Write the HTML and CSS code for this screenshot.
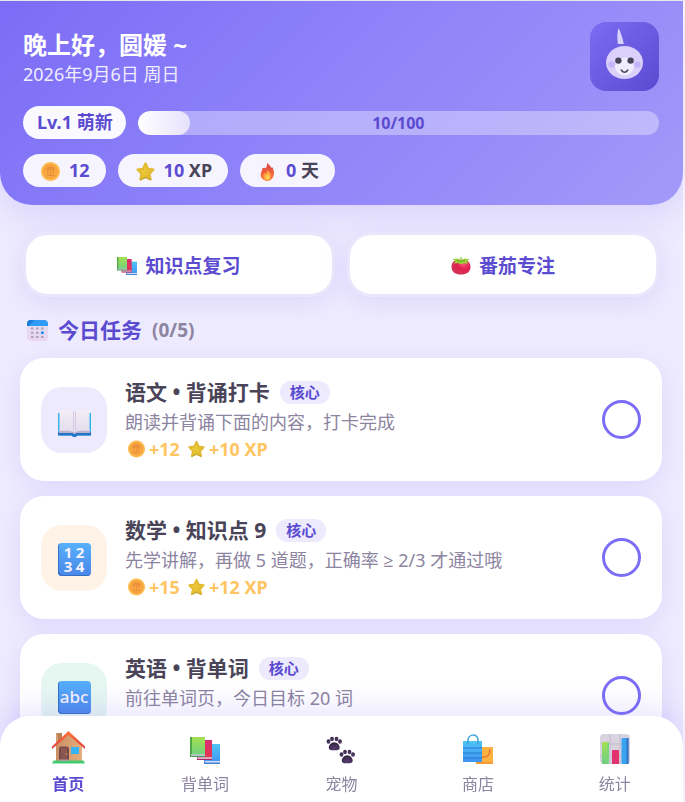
FILE: index.html
```html
<!DOCTYPE html>
<html lang="zh-CN">
<head>
<meta charset="utf-8">
<meta name="viewport" content="width=device-width, initial-scale=1">
<title>今日任务</title>
<link rel="stylesheet" href="styles.css">
</head>
<body>
<svg class="sprite" aria-hidden="true">
  <defs>
    <linearGradient id="g-horn" x1="0" y1="0" x2="1" y2="1"><stop offset="0" stop-color="#7c6cf3"/><stop offset="1" stop-color="#5a4ad0"/></linearGradient>
    <linearGradient id="g-green" x1="0" y1="0" x2="0" y2="1"><stop offset="0" stop-color="#a4df52"/><stop offset="1" stop-color="#6ccf83"/></linearGradient>
    <linearGradient id="g-red" x1="0" y1="0" x2="0" y2="1"><stop offset="0" stop-color="#d92c73"/><stop offset="1" stop-color="#e8384c"/></linearGradient>
    <linearGradient id="g-blue" x1="0" y1="0" x2="0" y2="1"><stop offset="0" stop-color="#4fc4f6"/><stop offset="1" stop-color="#3f93f0"/></linearGradient>
    <linearGradient id="g-key" x1="0" y1="0" x2="0" y2="1"><stop offset="0" stop-color="#56b0fb"/><stop offset="1" stop-color="#4a86e8"/></linearGradient>
    <linearGradient id="g-wall" x1="0" y1="0" x2="1" y2="0"><stop offset="0" stop-color="#c98f63"/><stop offset="1" stop-color="#e6ae7c"/></linearGradient>
    <linearGradient id="g-roof" x1="0" y1="0" x2="0" y2="1"><stop offset="0" stop-color="#ff7a3c"/><stop offset="1" stop-color="#dc3838"/></linearGradient>
    <linearGradient id="g-star" x1="0" y1="0" x2="1" y2="1"><stop offset="0" stop-color="#f3d845"/><stop offset="1" stop-color="#dfb22a"/></linearGradient>
    <linearGradient id="g-flame" x1="0" y1="0" x2="0" y2="1"><stop offset="0" stop-color="#dd4042"/><stop offset="1" stop-color="#ff7b38"/></linearGradient>
    <radialGradient id="g-tomato" cx=".65" cy=".3" r=".7"><stop offset="0" stop-color="#fb5378"/><stop offset=".5" stop-color="#e21f4f"/><stop offset="1" stop-color="#d33458"/></radialGradient>
    <linearGradient id="g-page" x1="0" y1="0" x2="0" y2="1"><stop offset="0" stop-color="#f3eef7"/><stop offset="1" stop-color="#e4dcec"/></linearGradient>
    <linearGradient id="g-sheet" x1="0" y1="0" x2="0" y2="1"><stop offset="0" stop-color="#e3dff0"/><stop offset="1" stop-color="#ead4f2"/></linearGradient>
    <radialGradient id="g-paw" cx=".5" cy=".75" r=".7"><stop offset="0" stop-color="#583a72"/><stop offset="1" stop-color="#35263f"/></radialGradient>
  </defs>
  <symbol id="coin" viewBox="0 0 18 18">
    <circle cx="9" cy="9" r="9" fill="#fdb949"/><circle cx="9" cy="9" r="6.800" fill="#f19a3f"/><circle cx="9" cy="9" r="5.700" fill="#f9ab43"/>
    <path d="M5.500 7Q6 4.800 9 4.800t3.500 2.200zM5.800 12.800h6.400M6.500 7.500v4.500M9 7.500v4.500M11.500 7.500v4.500" fill="#ee983d" stroke="#e88d3a" stroke-width="1.100"/>
  </symbol>
  <symbol id="star" viewBox="0 0 19 19">
    <path d="M9.500 1.500 12 6.800 17.500 7.500 13.500 11.700 14.600 17.300 9.500 14.900 4.400 17.300 5.500 11.700 1.500 7.500 7 6.800z" fill="url(#g-star)" stroke="#e2bb32" stroke-width="2.200" stroke-linejoin="round"/>
    <path d="m4 18 5.500-2.600L15 18" fill="none" stroke="#b5a02c" stroke-width="1"/>
  </symbol>
  <symbol id="flame" viewBox="0 0 18 19">
    <path d="M8.500.5c1 2 3.500 2.800 4 5 .5.700.8 0 1-.8 1.800 2.800 2.300 5.300 1.800 8-.8 4-3.600 6.200-6.600 6.200-3.500 0-6.500-2.400-6.500-6.300 0-2.800 1.500-3.600 1.600-6.200C5.800 5 7 6.500 7 6.500S9 4.500 8.500.5z" fill="url(#g-flame)"/>
    <path d="M8.500 8c2.600 1.600 4 3.900 3.900 6-.1 2.600-1.500 4.500-3.600 4.500-2.500 0-4-1.900-4-4.200 0-1.500.9-2.600 1.200-3.400l1.500 1.200c1-.9 1.300-2.300 1-4.100z" fill="#ffa83f"/>
    <path d="M9 12c1.800 1.700 2 3.300 1.800 4.400-.3 1.200-3.600 1.400-3.700-.6 0-1.300 1.500-2 1.900-3.800z" fill="#ffd35a"/>
  </symbol>
  <symbol id="books" viewBox="0 0 30 27">
    <path d="M14 7h16v20H14z" fill="url(#g-blue)"/><path d="M14 24h16v3H14z" fill="#4484d5"/><path d="M15 24h15v1.500H15z" fill="#d8d9f4"/>
    <path d="M7 3h15v20H7z" fill="url(#g-red)"/><path d="M7 20h15v3H7z" fill="#aa255f"/><path d="M7.500 20.300H22v1.500H7.500z" fill="#ead3eb"/>
    <path d="M0 0h15v20H0z" fill="url(#g-green)"/><path d="M0 0h2v20H0z" fill="#4fa746"/><path d="M0 17h15v3H0z" fill="#4d995b"/><path d="M1 17.300h14v1.400H1z" fill="#e0d9ed"/>
  </symbol>
  <symbol id="tomato" viewBox="0 0 20 20">
    <path d="M10 4c5.500-1.300 9.500 1.900 9.500 7S15.500 18.500 10 18.500.5 16 .5 11 4.500 2.700 10 4z" fill="url(#g-tomato)"/>
    <path d="m1.500 3 5.300-.5L9.500 4 9.200 1h1.500l.2 3 2.600-1.500 5 .7-2.500 2.200 1 2.300-4-.5L10 8.500 7.200 7 3 7.800l1.500-2.500z" fill="#9bcf38"/>
    <path d="m6 4.300 4 1 3.800-1" fill="none" stroke="#62a82e" stroke-width="1"/>
  </symbol>
  <symbol id="calendar" viewBox="0 0 21 21">
    <rect width="21" height="21" rx="4" fill="url(#g-sheet)"/><path d="M0 6V4a4 4 0 0 1 4-4h13a4 4 0 0 1 4 4v2z" fill="#319cf7"/><path d="M0 6V4a4 4 0 0 1 4-4h3L2 6z" fill="#1d79da"/>
    <g fill="#aba3b8"><path d="M4 7.500h2.500v2H4zM9 7.500h2.500v2H9zM14 7.500h2.500v2H14zM4 11.700h2.500v2H4zM9 11.700h2.500v2H9zM4 16h2.500v2H4zM9 16h2.500v2H9zM14 16h2.500v2H14z"/></g><path d="M14 11.500h2.700v2.500H14z" fill="#168ff2"/>
  </symbol>
  <symbol id="open-book" viewBox="0 0 33 33">
    <path d="M0 8h33v22.500H19c-1 2-4 2-5 0H0z" fill="#35b6ee"/><path d="M0 27h33v3.500H19c-1 2-4 2-5 0H0z" fill="#2475c8"/>
    <path d="M1 25h31v3H18.500c-1 1.500-3 1.500-4 0H1z" fill="#bcb2cf"/>
    <path d="M1.500 5.500C7 4.500 13 4.500 16.500 6.500v21c-3-2-9-2-15-1.500z" fill="url(#g-page)"/><path d="M31.500 5.500c-5.500-1-11.500-1-15 1v21c3-2 9-2 15-1.500z" fill="url(#g-page)"/>
    <path d="M15 6.500h3v20h-3z" fill="#d4c8e2"/><path d="M16 6h1v21h-1z" fill="#eee7f4"/>
  </symbol>
  <symbol id="house" viewBox="0 0 33 33">
    <path d="M4 2h6v12H4z" fill="#b87e54"/><path d="M4 2h2v12H4z" fill="#d19b6d"/><path d="M4 13 17 3l13 10v18H4z" fill="url(#g-wall)"/>
    <path d="M16.500 0 33 15.500V18L16.500 4 0 18v-2.500z" fill="url(#g-roof)"/><path d="M7 17.500c0-1 1-2 2-2h6c1 0 2 1 2 2V29H7z" fill="#764a46"/><path d="M9 17h6v12H9z" fill="#895750"/><circle cx="14.500" cy="23" r=".8" fill="#e3a45c"/>
    <path d="M19 16h8v7h-8z" fill="#34b4f4"/><path d="M1.500 29.500h30L33 32.500H0z" fill="#43cc6d"/><path d="M7 28.500h10V30H7z" fill="#b29aab"/>
  </symbol>
  <symbol id="paws" viewBox="0 0 30 30">
    <g id="paw" fill="url(#g-paw)"><ellipse cx="2.500" cy="7.500" rx="1.900" ry="2.300"/><ellipse cx="6" cy="5" rx="1.900" ry="2.300"/><ellipse cx="10.500" cy="5" rx="1.900" ry="2.300"/><ellipse cx="14" cy="7.500" rx="1.900" ry="2.300"/><path d="M8.200 8.300c3 0 5.500 2.800 5.500 5.300 0 3-3 2.700-5.500 2.700s-5.400.3-5.400-2.700c0-2.500 2.400-5.300 5.400-5.300z"/></g>
    <use href="#paw" x="13" y="13"/>
  </symbol>
  <symbol id="bags" viewBox="0 0 30 30">
    <path d="M15 13h15v17H13z" fill="#ffb242"/><path d="M13 28h17v2H13z" fill="#f29b32"/><path d="M19 23c5 1 8-2 8-8" fill="none" stroke="#e56c31" stroke-width="1.300"/>
    <path d="M0 7h19v21H0z" fill="url(#g-blue)"/><path d="M0 14h19M0 19h19M0 24h19" stroke="#2478d4" stroke-width="1"/><path d="M5 10V6c0-6 10-7 10 0v4" fill="none" stroke="#3aa1dc" stroke-width="1.500"/>
  </symbol>
  <symbol id="chart" viewBox="0 0 30 30">
    <rect width="30" height="30" rx="4" fill="#d8d3df"/><path d="M0 10h30M0 22h30M10 0v30M20 0v30" stroke="#c3bbcc" stroke-width="1"/>
    <path d="M2 9q0-1 1-1h5q1 0 1 1v21H2z" fill="url(#g-green)"/><path d="M7.500 8H8q1 0 1 1v21H7.500z" fill="#7bd77c"/><path d="M12 17q0-1 1-1h5q1 0 1 1v13h-7z" fill="#e0336f"/><path d="M21.500 5q0-1 1-1h5q1 0 1 1v25h-7z" fill="#38a3f1"/><path d="M26.500 4h1q1 0 1 1v25h-2z" fill="#3474c1"/>
  </symbol>
</svg>

<div class="app">
  <header class="hero">
    <div class="hero-top">
      <div>
        <h1 class="greeting">晚上好，圆媛 ~</h1>
        <p class="date">2026年9月6日 周日</p>
      </div>
      <svg class="avatar" viewBox="0 0 69 69" role="img" aria-label="宠物头像">
        <rect width="69" height="69" rx="16" fill="url(#g-horn)"/>
        <path d="M28.500 6c-1.500 5-1.400 11-.7 16h6C32.500 15.500 30.500 9.500 28.500 6z" fill="#d9d0fb"/>
        <ellipse cx="34.500" cy="40.500" rx="18.500" ry="16.500" fill="#d9d0fc"/>
        <ellipse cx="34.500" cy="44.500" rx="9.300" ry="9" fill="#f0edff"/>
        <circle cx="21.500" cy="42.600" r="3.200" fill="#c3b5fb"/><circle cx="47.500" cy="42.600" r="3.200" fill="#c3b5fb"/>
        <circle cx="28.400" cy="38.600" r="3.200" fill="#4a4458"/><circle cx="40.600" cy="38.600" r="3.200" fill="#4a4458"/>
        <path d="M31.200 48q3.300 4.600 6.600 0" fill="none" stroke="#4a4458" stroke-width="1.500" stroke-linecap="round"/>
      </svg>
    </div>
    <div class="level-row">
      <span class="pill level">Lv.1 萌新</span>
      <div class="progress" role="progressbar" aria-valuenow="10" aria-valuemin="0" aria-valuemax="100">
        <span class="progress-fill" style="width:10%"></span>
        <span class="progress-text">10/100</span>
      </div>
    </div>
    <div class="stats">
      <span class="pill stat"><svg><use href="#coin"/></svg><span><b>12</b></span></span>
      <span class="pill stat"><svg><use href="#star"/></svg><span><b>10</b> XP</span></span>
      <span class="pill stat"><svg><use href="#flame"/></svg><span><b>0</b> 天</span></span>
    </div>
  </header>

  <main class="content">
    <div class="quick">
      <button class="quick-btn" type="button"><svg><use href="#books"/></svg>知识点复习</button>
      <button class="quick-btn" type="button"><svg><use href="#tomato"/></svg>番茄专注</button>
    </div>
    <h2 class="section-title"><svg><use href="#calendar"/></svg>今日任务<span class="count">(0/5)</span></h2>
    <ul class="tasks">
      <li class="task">
        <span class="task-icon lilac"><svg><use href="#open-book"/></svg></span>
        <div class="task-body">
          <h3 class="task-title"><label for="task-1">语文 • 背诵打卡</label><span class="tag">核心</span></h3>
          <p class="task-desc">朗读并背诵下面的内容，打卡完成</p>
          <p class="reward"><svg><use href="#coin"/></svg>+12<svg><use href="#star"/></svg>+10 XP</p>
        </div>
        <input class="check" type="checkbox" id="task-1">
      </li>
      <li class="task">
        <span class="task-icon peach"><span class="key digits"><span>1</span><span>2</span><span>3</span><span>4</span></span></span>
        <div class="task-body">
          <h3 class="task-title"><label for="task-2">数学 • 知识点 9</label><span class="tag">核心</span></h3>
          <p class="task-desc">先学讲解，再做 5 道题，正确率 ≥ 2/3 才通过哦</p>
          <p class="reward"><svg><use href="#coin"/></svg>+15<svg><use href="#star"/></svg>+12 XP</p>
        </div>
        <input class="check" type="checkbox" id="task-2">
      </li>
      <li class="task">
        <span class="task-icon mint"><span class="key">abc</span></span>
        <div class="task-body">
          <h3 class="task-title"><label for="task-3">英语 • 背单词</label><span class="tag">核心</span></h3>
          <p class="task-desc">前往单词页，今日目标 20 词</p>
        </div>
        <input class="check" type="checkbox" id="task-3">
      </li>
    </ul>
  </main>

  <nav class="tabs">
    <a class="tab active" href="#"><svg><use href="#house"/></svg>首页</a>
    <a class="tab" href="#"><svg class="low"><use href="#books"/></svg>背单词</a>
    <a class="tab" href="#"><svg><use href="#paws"/></svg>宠物</a>
    <a class="tab" href="#"><svg><use href="#bags"/></svg>商店</a>
    <a class="tab" href="#"><svg><use href="#chart"/></svg>统计</a>
  </nav>
</div>
</body>
</html>
```
FILE: styles.css
```css
:root {
  --purple: #5b4bd1;
  --violet: #7c6cf6;
  --ink: #4a4458;
  --muted: #8c84a0;
  --lilac: #edeafd;
  --gold: #ffc562;
  --shadow: 0 6px 24px rgba(124, 108, 246, .15);
}

* {
  box-sizing: border-box;
  margin: 0;
  padding: 0;
}

body {
  padding-right: 2px;
  border-top: 1px solid #e8e8ec;
  background: #fbfaff;
  color: var(--ink);
  font-family: "Noto Sans", "Open Sans", "Noto Sans CJK SC", sans-serif;
  font-size: 18px;
}

.sprite {
  position: absolute;
  width: 0;
  height: 0;
}

.app {
  min-height: calc(100vh - 1px);
  background: #eeebfe;
}

.hero {
  padding: 21px 24px 18px 23px;
  border-radius: 0 0 32px 32px;
  background: linear-gradient(135deg, #7c6cf6, #8b80f9 40%, #9b8ff9 80%, #a29bf8);
  box-shadow: 0 9px 36px rgba(124, 108, 246, .2);
}

.hero-top {
  display: flex;
  justify-content: space-between;
  margin-bottom: 15px;
  color: #fff;
}

.greeting {
  margin-top: 7px;
  font-size: 24px;
  line-height: 32px;
}

.date {
  color: #efedff;
  line-height: 26px;
}

.avatar {
  width: 69px;
  height: 69px;
}

.level-row,
.stats {
  display: flex;
  align-items: center;
  gap: 12px;
}

.stats {
  margin-top: 15px;
}

.pill {
  display: flex;
  align-items: center;
  height: 33px;
  padding: 0 16px 0 18px;
  border-radius: 17px;
  background: #f6f4ff;
  font-weight: 700;
  line-height: 27px;
  white-space: nowrap;
}

.level {
  padding: 0 13px 0 14px;
  background: #faf9ff;
  color: var(--purple);
}

.stat {
  gap: 9px;
}

.stat b {
  color: var(--purple);
  font-weight: 700;
}

.stat svg {
  width: 19px;
  height: 19px;
  margin-top: 2px;
}

.progress {
  position: relative;
  flex: 1;
  height: 24px;
  overflow: hidden;
  border-radius: 12px;
  background: rgba(255, 255, 255, .35);
}

.progress-fill {
  display: block;
  height: 100%;
  border-radius: 12px;
  background: linear-gradient(90deg, #fff, #e6e1fd);
}

.progress-text {
  position: absolute;
  inset: 0;
  color: var(--purple);
  font-size: 16px;
  font-weight: 700;
  line-height: 24px;
  text-align: center;
}

.content {
  padding: 27px 21px 40px 20px;
}

.quick {
  display: grid;
  grid-template-columns: 1fr 1fr;
  gap: 12px;
  padding: 0 3px;
}

.quick-btn {
  display: flex;
  align-items: center;
  justify-content: center;
  gap: 8px;
  height: 65px;
  border: 3px solid #eae6fc;
  border-radius: 24px;
  background: #fff;
  background-clip: padding-box;
  box-shadow: var(--shadow);
  color: var(--purple);
  font-family: inherit;
  font-size: 19px;
  font-weight: 700;
}

.quick-btn svg {
  width: 20px;
  height: 20px;
  margin-top: 3px;
}

.section-title {
  display: flex;
  align-items: center;
  gap: 10px;
  margin: 18px 0 13px;
  padding-left: 7px;
  color: var(--purple);
  font-size: 21px;
  line-height: 30px;
}

.section-title svg {
  width: 21px;
  height: 21px;
}

.count {
  color: var(--muted);
  font-size: 19px;
}

.tasks {
  display: grid;
  gap: 15px;
  list-style: none;
}

.task {
  display: flex;
  align-items: center;
  gap: 18px;
  min-height: 123px;
  padding: 18px 21px;
  border-radius: 24px;
  background: #fff;
  box-shadow: var(--shadow);
}

.task-icon {
  display: flex;
  align-items: center;
  justify-content: center;
  width: 66px;
  height: 66px;
  padding-top: 3px;
  border-radius: 21px;
}

.lilac { background: #edeafd; }
.peach { background: #fff3e8; }
.mint { background: #e6f7f1; }

.task-icon svg {
  width: 33px;
  height: 33px;
}

.key {
  display: grid;
  place-content: center;
  width: 33px;
  height: 33px;
  border-radius: 4px;
  background: linear-gradient(#56b0fb, #4a86e8);
  box-shadow: inset 1px -1px #326fc4;
  color: #f7f2ff;
  font-size: 17px;
  font-weight: 500;
  line-height: 24px;
}

.digits {
  grid-template-columns: 12px 12px;
  font-size: 15px;
  font-weight: 700;
  line-height: 14px;
  text-align: center;
}

.task-body {
  flex: 1;
  align-self: flex-start;
}

.task-title {
  display: flex;
  align-items: center;
  gap: 10px;
  font-size: 21px;
  line-height: 33px;
}

.tag {
  padding: 0 10px;
  border-radius: 12px;
  background: var(--lilac);
  color: var(--purple);
  font-size: 15px;
  line-height: 23px;
}

.task-desc {
  color: var(--muted);
  line-height: 26px;
}

.reward {
  display: flex;
  align-items: center;
  gap: 4px;
  padding-left: 3px;
  color: var(--gold);
  font-weight: 700;
  line-height: 28px;
}

.reward svg {
  width: 17px;
  height: 18px;
}

.reward svg + svg {
  margin-left: 4px;
}

.check {
  width: 39px;
  height: 39px;
  border: 3px solid var(--violet);
  border-radius: 50%;
  appearance: none;
  background: transparent;
}

.check:checked {
  background: var(--violet);
}

.tabs {
  position: fixed;
  inset: auto 2px 0 0;
  display: grid;
  grid-template-columns: repeat(5, 1fr);
  height: 86px;
  padding: 15px 0 6px;
  border-radius: 30px 30px 0 0;
  background: #fff;
  box-shadow: 0 -6px 30px rgba(124, 108, 246, .2);
}

.tab {
  display: flex;
  flex-direction: column;
  align-items: center;
  justify-content: space-between;
  color: var(--muted);
  font-size: 16px;
  line-height: 24px;
  text-decoration: none;
}

.tab svg {
  width: 30px;
  height: 30px;
  margin-top: 3px;
}

.tab svg.low {
  height: 27px;
  margin-top: 6px;
}

.tab.active {
  color: var(--purple);
  font-weight: 700;
}

.tab.active svg {
  width: 33px;
  height: 33px;
  margin-top: 0;
}
```
